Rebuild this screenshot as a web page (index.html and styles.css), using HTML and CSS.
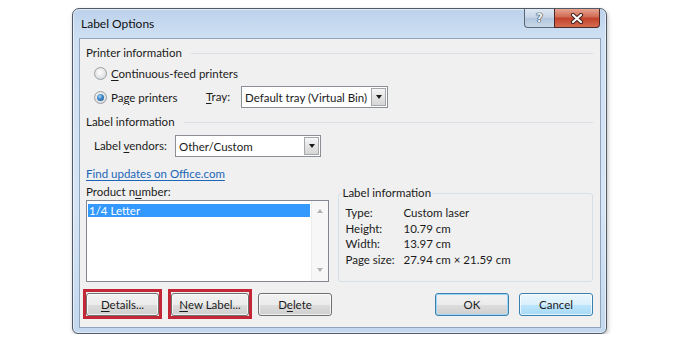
FILE: index.html
```html
<!DOCTYPE html>
<html lang="en">
<head>
    <meta charset="UTF-8">
    <title>Label Options</title>
    <link rel="stylesheet" href="styles.css">
</head>
<body>
<div class="window">
    <div class="titlebar">
        <span class="title">Label Options</span>
        <div class="caption-buttons">
            <span class="cap-btn help">?</span>
            <span class="cap-btn close">
                <svg width="14" height="11" viewBox="0 0 14 11">
                    <path d="M3 2 L11 9 M11 2 L3 9" stroke="#40201c" stroke-width="4.2" stroke-linecap="round"/>
                    <path d="M3 2 L11 9 M11 2 L3 9" stroke="#ffffff" stroke-width="2.2" stroke-linecap="round"/>
                </svg>
            </span>
        </div>
    </div>

    <div class="client">
        <div class="group-head">Printer information</div>
        <div class="row radio-row">
            <label class="radio"><span class="radio-dot"></span><span><u>C</u>ontinuous-feed printers</span></label>
        </div>
        <div class="row radio-row">
            <label class="radio radio-page"><span class="radio-dot checked"></span><span>Pa<u>g</u>e printers</span></label>
            <span class="field-label tray-label"><u>T</u>ray:</span>
            <div class="combo tray-combo">
                <span class="combo-text">Default tray (Virtual Bin)</span>
                <span class="combo-btn"><span class="arrow-down"></span></span>
            </div>
        </div>

        <div class="group-head head-label">Label information</div>
        <div class="row vendor-row">
            <span class="field-label vendor-label">Label <u>v</u>endors:</span>
            <div class="combo vendor-combo">
                <span class="combo-text">Other/Custom</span>
                <span class="combo-btn"><span class="arrow-down"></span></span>
            </div>
        </div>

        <a class="link" href="#">Find updates on Office.com</a>

        <div class="content">
            <div class="product">
                <div class="product-label">Product n<u>u</u>mber:</div>
                <div class="listbox">
                    <div class="list-items">
                        <div class="list-item selected">1/4 Letter</div>
                    </div>
                    <div class="scrollbar">
                        <span class="sb-arrow up"></span>
                        <span class="sb-arrow down"></span>
                    </div>
                </div>
            </div>

            <fieldset class="info">
                <legend>Label information</legend>
                <div class="info-grid">
                    <span>Type:</span><span>Custom laser</span>
                    <span>Height:</span><span>10.79 cm</span>
                    <span>Width:</span><span>13.97 cm</span>
                    <span>Page size:</span><span>27.94 cm &times; 21.59 cm</span>
                </div>
            </fieldset>
        </div>

        <div class="buttons">
            <span class="highlight"><button class="btn btn-details"><u>D</u>etails...</button></span>
            <span class="highlight"><button class="btn btn-new"><u>N</u>ew Label...</button></span>
            <button class="btn btn-delete">D<u>e</u>lete</button>
            <span class="spacer"></span>
            <button class="btn btn-ok">OK</button>
            <button class="btn btn-cancel">Cancel</button>
        </div>
    </div>
</div>
</body>
</html>
```

FILE: styles.css
```css
* {
    box-sizing: border-box;
}

body {
    margin: 0;
    background: #ffffff;
    font-family: Lato, "Noto Sans", sans-serif;
    font-size: 11.5px;
    color: #1b1b1b;
    white-space: nowrap;
}

u {
    text-decoration-thickness: 1px;
    text-underline-offset: 2px;
}

/* window frame */
.window {
    margin: 8px 0 0 72px;
    width: 535px;
    height: 326px;
    padding: 0 5px 5px 6px;
    border: 1px solid #4f5a66;
    border-radius: 7px 7px 6px 6px;
    background: linear-gradient(#bcd2eb 0, #cfe0f3 30px, #d6e5f5 60%, #c3d8ee 100%);
    box-shadow: inset 0 0 0 1px rgba(255, 255, 255, 0.55), 1px 2px 4px rgba(0, 0, 0, 0.25);
}

.titlebar {
    height: 29px;
    display: flex;
    justify-content: space-between;
    align-items: flex-start;
}

.title {
    margin: 7px 0 0 2px;
    line-height: 16px;
    font-size: 12px;
    color: #111;
}

.caption-buttons {
    display: flex;
    margin-right: 1px;
}

.cap-btn {
    height: 19px;
    display: flex;
    align-items: center;
    justify-content: center;
    border: 1px solid #5b6775;
    border-top: none;
}

.help {
    width: 30px;
    border-radius: 0 0 0 4px;
    border-right: none;
    background: linear-gradient(#dfe8f3, #c4d3e6 50%, #b3c6dd 51%, #c8d8ea);
    color: #eef2f6;
    font-family: "DejaVu Sans", sans-serif;
    font-weight: bold;
    font-size: 12px;
    text-shadow: 0 0 1px #2f3a46, 0 0 1px #2f3a46, 0 0 1px #2f3a46;
}

.close {
    width: 46px;
    border-color: #4e2a26;
    border-radius: 0 0 4px 0;
    background: linear-gradient(#e6a491, #d06a53 45%, #c2412a 50%, #d46c50);
}

/* client area */
.client {
    height: 290px;
    padding: 0 7px 0 6px;
    border: 1px solid #8fa4ba;
    background: #f0f0f0;
}

.group-head {
    margin-top: 6px;
    height: 16px;
    line-height: 16px;
    display: flex;
    align-items: center;
}

.group-head::after {
    content: "";
    flex: 1;
    height: 1px;
    margin-left: 9px;
    background: #d9dfe5;
}

.head-label {
    margin-top: 5px;
}

.row {
    display: flex;
    align-items: center;
    padding-left: 8px;
}

.radio-row {
    height: 24px;
}

.radio {
    display: flex;
    align-items: center;
    gap: 4px;
}

.radio-page {
    width: 112px;
}

.radio-dot {
    width: 13px;
    height: 13px;
    border-radius: 50%;
    border: 1px solid #9a9ea3;
    background: radial-gradient(circle at 45% 40%, #ffffff 0, #e9e9e9 45%, #cfd2d5 100%);
    display: flex;
    align-items: center;
    justify-content: center;
}

.radio-dot.checked::after {
    content: "";
    width: 7px;
    height: 7px;
    border-radius: 50%;
    background: radial-gradient(circle at 40% 35%, #a9d4f5 0, #3d86c6 45%, #1c4a78 100%);
}

.field-label {
    line-height: 16px;
}

.tray-label {
    width: 35px;
}

.vendor-label {
    width: 81px;
}

.combo {
    height: 22px;
    display: flex;
    align-items: center;
    justify-content: space-between;
    border: 1px solid #8c9096;
    background: #ffffff;
    padding: 1px;
    overflow: hidden;
}

.tray-combo {
    width: 147px;
}

.vendor-row {
    margin-top: 5px;
    height: 22px;
}

.vendor-combo {
    width: 146px;
}

.combo-text {
    padding-left: 2px;
}

.combo-btn {
    width: 15px;
    height: 18px;
    flex: none;
    border: 1px solid #a4a7ab;
    background: linear-gradient(#f6f6f6, #e4e4e4 50%, #d6d6d6);
    display: flex;
    align-items: center;
    justify-content: center;
}

.arrow-down {
    width: 0;
    height: 0;
    border-left: 3.5px solid transparent;
    border-right: 3.5px solid transparent;
    border-top: 4px solid #1a1a1a;
}

.link {
    display: block;
    margin-top: 9px;
    height: 16px;
    line-height: 16px;
    color: #1a66b8;
    text-decoration: underline;
    text-underline-offset: 2px;
    width: max-content;
}

/* product list and info box */
.content {
    margin-top: 2px;
    height: 99px;
    display: flex;
    gap: 9px;
}

.product {
    width: 243px;
}

.product-label {
    height: 16px;
    line-height: 16px;
}

.listbox {
    height: 82px;
    border: 1px solid #828790;
    background: #ffffff;
    display: flex;
}

.list-items {
    flex: 1;
    padding: 3px 1px 0 1px;
}

.list-item {
    height: 13px;
    line-height: 13px;
    padding-left: 1px;
}

.list-item.selected {
    background: #3399ff;
    color: #ffffff;
}

.scrollbar {
    width: 17px;
    background: #f7f7f7;
    border-left: 1px solid #ececec;
    display: flex;
    flex-direction: column;
    justify-content: space-between;
    align-items: center;
    padding: 8px 0 9px;
}

.sb-arrow {
    width: 0;
    height: 0;
    border-left: 3.5px solid transparent;
    border-right: 3.5px solid transparent;
}

.sb-arrow.up {
    border-bottom: 4px solid #b3b3b3;
}

.sb-arrow.down {
    border-top: 4px solid #b3b3b3;
}

.info {
    margin: 1px 0 0;
    width: 256px;
    height: 97px;
    padding: 4px 7px 0 7px;
    border: 1px solid #d5dfe5;
    border-radius: 3px;
    min-width: 0;
}

.info legend {
    margin-left: -4px;
    padding: 0 1px;
    line-height: 16px;
}

.info-grid {
    display: grid;
    grid-template-columns: 58px auto;
    line-height: 15.5px;
}

/* bottom buttons */
.buttons {
    margin-top: 6px;
    height: 30px;
    display: flex;
    align-items: center;
    margin-left: -3px;
}

.highlight {
    border: 3px solid #c32634;
    padding-top: 1px;
    display: flex;
    margin-right: 6px;
}

.spacer {
    flex: 1;
}

.btn {
    height: 23px;
    padding: 0;
    font-family: inherit;
    font-size: 11.5px;
    color: #1b1b1b;
    border: 1px solid #707070;
    border-radius: 3px;
    background: linear-gradient(#f2f2f2, #ebebeb 50%, #dddddd 51%, #cfcfcf);
    box-shadow: inset 0 0 0 1px rgba(255, 255, 255, 0.7);
}

.btn-details {
    width: 73px;
}

.btn-new {
    width: 78px;
}

.btn-delete {
    width: 74px;
}

.btn-ok {
    width: 74px;
    border-color: #3c7fb1;
    box-shadow: inset 0 0 0 1px #9fd6f5;
}

.btn-cancel {
    width: 74px;
    margin-left: 10px;
    border-color: #3c7fb1;
    background: linear-gradient(#eaf6fd, #d9f0fc 50%, #bee6fd 51%, #a7d9f5);
}
```
